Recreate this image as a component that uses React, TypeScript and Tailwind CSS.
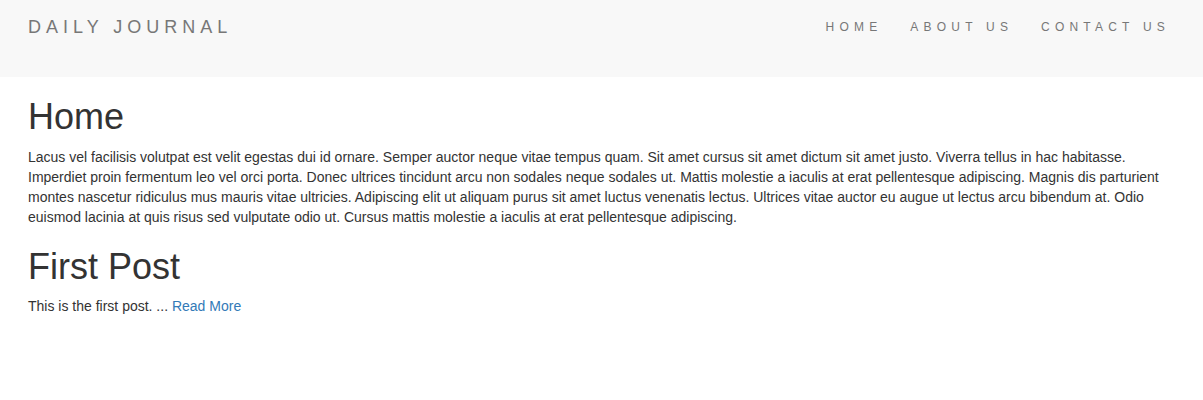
export default function App() {
  const links = ['Home', 'About Us', 'Contact Us']

  return (
    <div className="min-h-[400px] bg-white font-['Liberation_Sans',Arial,sans-serif] text-[14px] leading-[20px] text-[#333]">
      {/* Navbar */}
      <nav className="flex h-[77px] items-start justify-between bg-[#f8f8f8] pl-[28px] pr-[19px] pt-[17px]">
        <a href="#" className="text-[18px] uppercase leading-[20px] tracking-[5px] text-[#777]">
          Daily Journal
        </a>
        <ul className="flex">
          {links.map((link) => (
            <li key={link}>
              <a
                href="#"
                className="block px-[14px] text-[12px] uppercase leading-[20px] tracking-[5.2px] text-[#777]"
              >
                {link}
              </a>
            </li>
          ))}
        </ul>
      </nav>

      {/* Content */}
      <div className="px-[28px]">
        <h1 className="mb-[10px] mt-[20px] text-[36px] leading-[1.1]">Home</h1>
        <p className="mb-[10px]">
          Lacus vel facilisis volutpat est velit egestas dui id ornare. Semper auctor neque vitae tempus quam. Sit amet cursus sit amet dictum sit amet justo. Viverra tellus in hac habitasse. Imperdiet proin fermentum leo vel orci porta. Donec ultrices tincidunt arcu non sodales neque sodales ut. Mattis molestie a iaculis at erat pellentesque adipiscing. Magnis dis parturient montes nascetur ridiculus mus mauris vitae ultricies. Adipiscing elit ut aliquam purus sit amet luctus venenatis lectus. Ultrices vitae auctor eu augue ut lectus arcu bibendum at. Odio euismod lacinia at quis risus sed vulputate odio ut. Cursus mattis molestie a iaculis at erat pellentesque adipiscing.
        </p>

        <h1 className="mb-[10px] mt-[20px] text-[36px] leading-[1.1]">First Post</h1>
        <p>
          This is the first post. ...{' '}
          <a href="#" className="text-[#337ab7]">
            Read More
          </a>
        </p>
      </div>
    </div>
  )
}
